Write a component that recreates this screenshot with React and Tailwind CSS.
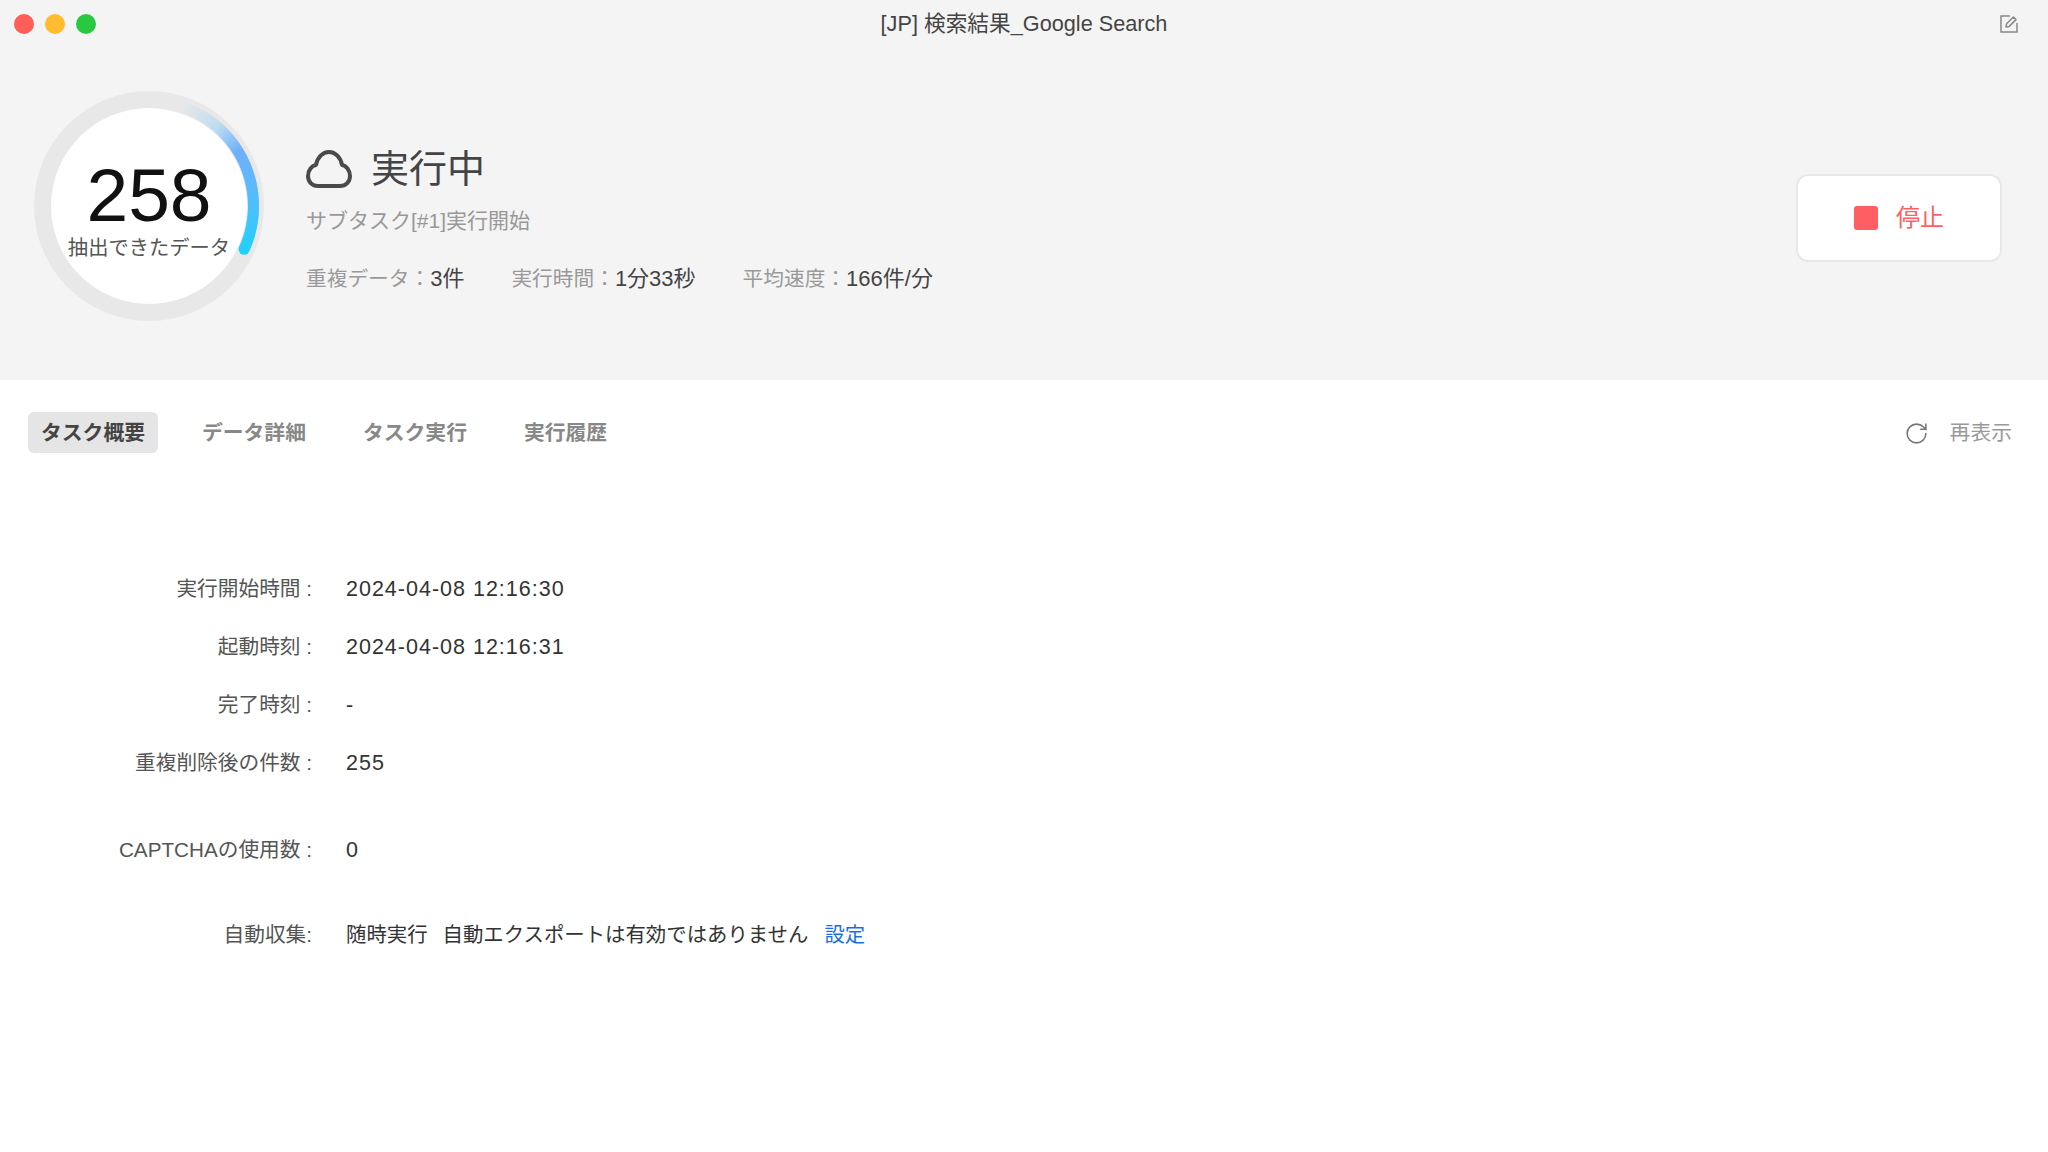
import { RotateCw } from "lucide-react";

const CX = 115;
const CY = 115;
const R = 104.5;

// colour stops of the progress arc: angle from 12 o'clock, clockwise
const STOPS = [
  [18, [232, 232, 232]],
  [40, [190, 221, 240]],
  [58, [112, 176, 250]],
  [80, [90, 186, 251]],
  [115, [34, 208, 255]],
];

function colorAt(deg) {
  for (let i = 1; i < STOPS.length; i++) {
    const [a, ca] = STOPS[i - 1];
    const [b, cb] = STOPS[i];
    if (deg <= b) {
      const t = (deg - a) / (b - a);
      const c = ca.map((v, k) => Math.round(v + (cb[k] - v) * t));
      return `rgb(${c[0]},${c[1]},${c[2]})`;
    }
  }
  return "rgb(34,208,255)";
}

function point(deg) {
  const rad = (deg * Math.PI) / 180;
  return [CX + R * Math.sin(rad), CY - R * Math.cos(rad)];
}

function ProgressArc() {
  const segments = [];
  for (let d = 18; d < 114; d += 1) {
    const [x1, y1] = point(d);
    const [x2, y2] = point(d + 1.4);
    segments.push(
      <path
        key={d}
        d={`M${x1} ${y1} A${R} ${R} 0 0 1 ${x2} ${y2}`}
        stroke={colorAt(d)}
        strokeWidth="11"
        fill="none"
      />
    );
  }
  const [ex, ey] = point(114.5);

  return (
    <svg width="230" height="230" className="absolute inset-0">
      {segments}
      <circle cx={ex} cy={ey} r="5.5" fill="rgb(34,208,255)" />
    </svg>
  );
}

function Row({ label, className = "", children }) {
  return (
    <div className={`flex h-[30px] items-center ${className}`}>
      <div className="w-[312px] text-right text-[20.7px] text-[#555]">{label}</div>
      <div className="ml-[34px] text-[20.4px] text-[#333]">{children}</div>
    </div>
  );
}

function Num({ children }) {
  return <span className="text-[21.5px] tracking-[1px]">{children}</span>;
}

function Stat({ label, value }) {
  return (
    <span className="text-[20.7px] text-[#999]">
      {label}：<span className="text-[22px] text-[#444]">{value}</span>
    </span>
  );
}

export default function App() {
  return (
    <div className="min-h-screen bg-white font-['Liberation_Sans','Noto_Sans_CJK_JP',sans-serif]">
      <header className="h-[380px] bg-[#f4f4f4]">
        {/* title bar */}
        <div className="flex h-12 items-center">
          <div className="flex flex-1 items-center gap-[11px]">
            <span className="ml-[14px] h-5 w-5 rounded-full bg-[#ff5f57]" />
            <span className="h-5 w-5 rounded-full bg-[#febc2e]" />
            <span className="h-5 w-5 rounded-full bg-[#28c840]" />
          </div>
          <div className="text-[21.7px] text-[#444]">[JP] 検索結果_Google Search</div>
          <div className="flex flex-1 justify-end">
            <svg className="mr-[30px]" width="18" height="18" viewBox="0 0 18 18" fill="none" stroke="#888" strokeWidth="1.5">
              <path d="M10 1H1V17H17V8" />
              <path d="M6 12L6.6 8.8L13.4 2L16 4.6L9.2 11.4Z" strokeLinejoin="round" />
            </svg>
          </div>
        </div>

        <div className="flex items-start pl-[34px] pr-[46px] pt-[43px]">
          {/* gauge */}
          <div className="relative flex h-[230px] w-[230px] items-center justify-center rounded-full bg-[#e8e8e8]">
            <div className="flex h-[196px] w-[196px] flex-col items-center rounded-full bg-white">
              <div className="mt-[45px] h-[84px] text-[75px] leading-[84px] text-[#111]">258</div>
              <div className="-mt-[2px] text-[20.3px] leading-[26px] text-[#555]">抽出できたデータ</div>
            </div>
            <ProgressArc />
          </div>

          {/* status */}
          <div className="ml-[42px] mt-[57px]">
            <div className="flex h-10 items-center gap-[19px]">
              <svg className="mt-[2px]" width="46" height="38" viewBox="0 0 46 38" fill="none" stroke="#4a4a4a" strokeWidth="4">
                <path d="M12 36H34C40 36 44 31.6 44 26C44 20 40 15.6 36 15C34.6 7.6 29.4 2 23 2C16.6 2 11.4 7.6 10 15C6 15.6 2 20 2 26C2 31.6 6 36 12 36Z" strokeLinejoin="round" />
              </svg>
              <span className="mt-[2px] text-[38px] leading-10 text-[#444]">実行中</span>
            </div>
            <div className="mt-[19px] h-7 text-[21px] leading-7 text-[#999]">サブタスク[#1]実行開始</div>
            <div className="mt-[30px] flex h-7 gap-[47px] leading-7">
              <Stat label="重複データ" value="3件" />
              <Stat label="実行時間" value="1分33秒" />
              <Stat label="平均速度" value="166件/分" />
            </div>
          </div>

          {/* stop button */}
          <button className="ml-auto mt-[83px] flex h-[88px] w-[206px] items-center justify-center gap-[18px] rounded-xl border-2 border-[#e8e8e8] bg-white">
            <span className="h-6 w-6 rounded-[3px] bg-[#ff5f63]" />
            <span className="text-[24px] text-[#ff5f63]">停止</span>
          </button>
        </div>
      </header>

      {/* tabs */}
      <div className="mt-8 flex h-[41px] items-center pl-[28px] pr-[36px]">
        <div className="flex items-center gap-[31px] text-[20.8px] font-bold text-[#888]">
          <div className="rounded-md bg-[#e5e5e5] px-[13px] py-[5px] text-[#444]">タスク概要</div>
          <div className="px-[13px] py-[5px]">データ詳細</div>
          <div className="px-[13px] py-[5px]">タスク実行</div>
          <div className="px-[13px] py-[5px]">実行履歴</div>
        </div>
        <div className="ml-auto mt-[1px] flex items-center gap-[21px] text-[20.8px] text-[#999]">
          <RotateCw size={25} strokeWidth={1.5} color="#777" />
          <span>再表示</span>
        </div>
      </div>

      {/* details */}
      <div className="mt-[121px]">
        <Row label="実行開始時間 :">
          <Num>2024-04-08 12:16:30</Num>
        </Row>
        <Row label="起動時刻 :" className="mt-[28px]">
          <Num>2024-04-08 12:16:31</Num>
        </Row>
        <Row label="完了時刻 :" className="mt-[28px]">
          <Num>-</Num>
        </Row>
        <Row label="重複削除後の件数 :" className="mt-[28px]">
          <Num>255</Num>
        </Row>
        <Row label="CAPTCHAの使用数 :" className="mt-[57px]">
          <Num>0</Num>
        </Row>
        <Row label="自動収集:" className="mt-[55px]">
          随時実行<span className="ml-[15px]">自動エクスポートは有効ではありません</span>
          <span className="ml-[16px] text-[#1a6fe0]">設定</span>
        </Row>
      </div>
    </div>
  );
}
